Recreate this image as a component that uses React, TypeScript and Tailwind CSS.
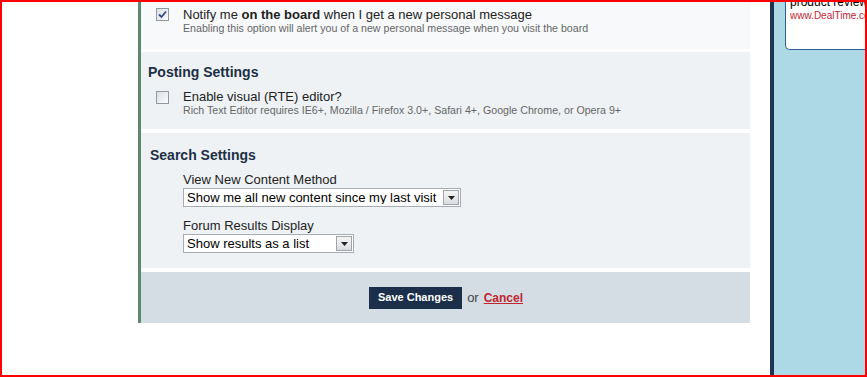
import React from "react";

function Checkbox({ checked }: { checked?: boolean }) {
  return (
    <span className="flex h-[13px] w-[13px] shrink-0 items-center justify-center border border-[#8f9aa5] bg-gradient-to-br from-[#dcdfe3] to-[#fbfbfc]">
      {checked && (
        <svg width="9" height="9" viewBox="0 0 9 9">
          <path d="M1 4.5 L3.5 7 L8 1.5" fill="none" stroke="#2c4d86" strokeWidth="1.8" />
        </svg>
      )}
    </span>
  );
}

function Select({ value, width }: { value: string; width: string }) {
  return (
    <div className={`flex h-[19px] items-center border border-[#a5acb2] bg-white ${width}`}>
      <span className="flex-1 truncate pl-[3px] text-[13px] leading-none text-black">{value}</span>
      <span className="mr-[1px] flex h-[15px] w-[16px] items-center justify-center border border-[#9ea4aa] bg-gradient-to-b from-[#f4f4f4] to-[#dadde0]">
        <svg width="7" height="4" viewBox="0 0 7 4">
          <path d="M0 0 H7 L3.5 4 Z" fill="#222" />
        </svg>
      </span>
    </div>
  );
}

export default function App() {
  return (
    <div
      className="box-border flex h-[377px] w-[867px] overflow-hidden border-2 border-[#ff0000] bg-white"
      style={{ fontFamily: '"Liberation Sans", Arial, sans-serif' }}
    >
      {/* left blank */}
      <div className="w-[136px] shrink-0" />

      {/* main settings panel */}
      <div className="flex h-[321px] w-[612px] shrink-0 flex-col gap-[3px] border-l-[3px] border-[#5a8a6b] bg-white">
        {/* top section (cut off) */}
        <div className="h-[47px] bg-[#f7f9fb] pl-[15px] pt-[6px]">
          <div className="flex gap-[14px]">
            <Checkbox checked />
            <div>
              <div className="text-[13px] leading-[14px] text-[#222]">
                Notify me <b>on the board</b> when I get a new personal message
              </div>
              <div className="text-[10.65px] leading-[12px] text-[#666]">
                Enabling this option will alert you of a new personal message when you visit the board
              </div>
            </div>
          </div>
        </div>

        {/* Posting Settings */}
        <div className="h-[77px] bg-[#eef2f5] pl-[7px] pt-[12px]">
          <h2 className="text-[14px] font-bold leading-[16px] text-[#1c2f45]">Posting Settings</h2>
          <div className="mt-[9px] flex gap-[14px] pl-[8px]">
            <div className="pt-[2px]">
              <Checkbox />
            </div>
            <div>
              <div className="text-[13px] leading-[15px] text-[#222]">Enable visual (RTE) editor?</div>
              <div className="text-[10.65px] leading-[12px] text-[#666]">
                Rich Text Editor requires IE6+, Mozilla / Firefox 3.0+, Safari 4+, Google Chrome, or Opera 9+
              </div>
            </div>
          </div>
        </div>

        {/* Search Settings */}
        <div className="mt-[1px] h-[135px] bg-[#eef2f5] pl-[9px] pt-[14px]">
          <h2 className="text-[14px] font-bold leading-[16px] text-[#1c2f45]">Search Settings</h2>
          <div className="mt-[9px] flex flex-col pl-[33px]">
            <div className="text-[13px] leading-[16px] text-[#222]">View New Content Method</div>
            <Select value="Show me all new content since my last visit" width="w-[278px]" />
            <div className="mt-[11px] text-[13px] leading-[16px] text-[#222]">Forum Results Display</div>
            <Select value="Show results as a list" width="w-[171px]" />
          </div>
        </div>

        {/* footer */}
        <div className="mt-[1px] flex h-[51px] items-center justify-center gap-[5px] bg-[#d5dde4] pl-[1px]">
          <button className="h-[22px] bg-[#1c2f4a] px-[9px] text-[11px] font-bold text-white">Save Changes</button>
          <span className="text-[13px] text-[#444]">or</span>
          <a className="text-[12px] font-bold text-[#c0262f] underline">Cancel</a>
        </div>
      </div>

      {/* gap */}
      <div className="w-[20px] shrink-0" />

      {/* right sidebar */}
      <div className="flex flex-1 border-l-4 border-[#1f3551] bg-[#add8e6] pl-[11px]">
        <div className="-mt-[6px] h-[54px] w-[100px] shrink-0 rounded-bl-[5px] border-b border-l border-[#2b5f93] bg-white pl-[4px]">
          <div className="whitespace-nowrap text-[12px] leading-[13px] text-black">product reviews</div>
          <div className="mt-[1px] whitespace-nowrap text-[10px] leading-[12px] text-[#c0262f]">www.DealTime.com</div>
        </div>
      </div>
    </div>
  );
}
